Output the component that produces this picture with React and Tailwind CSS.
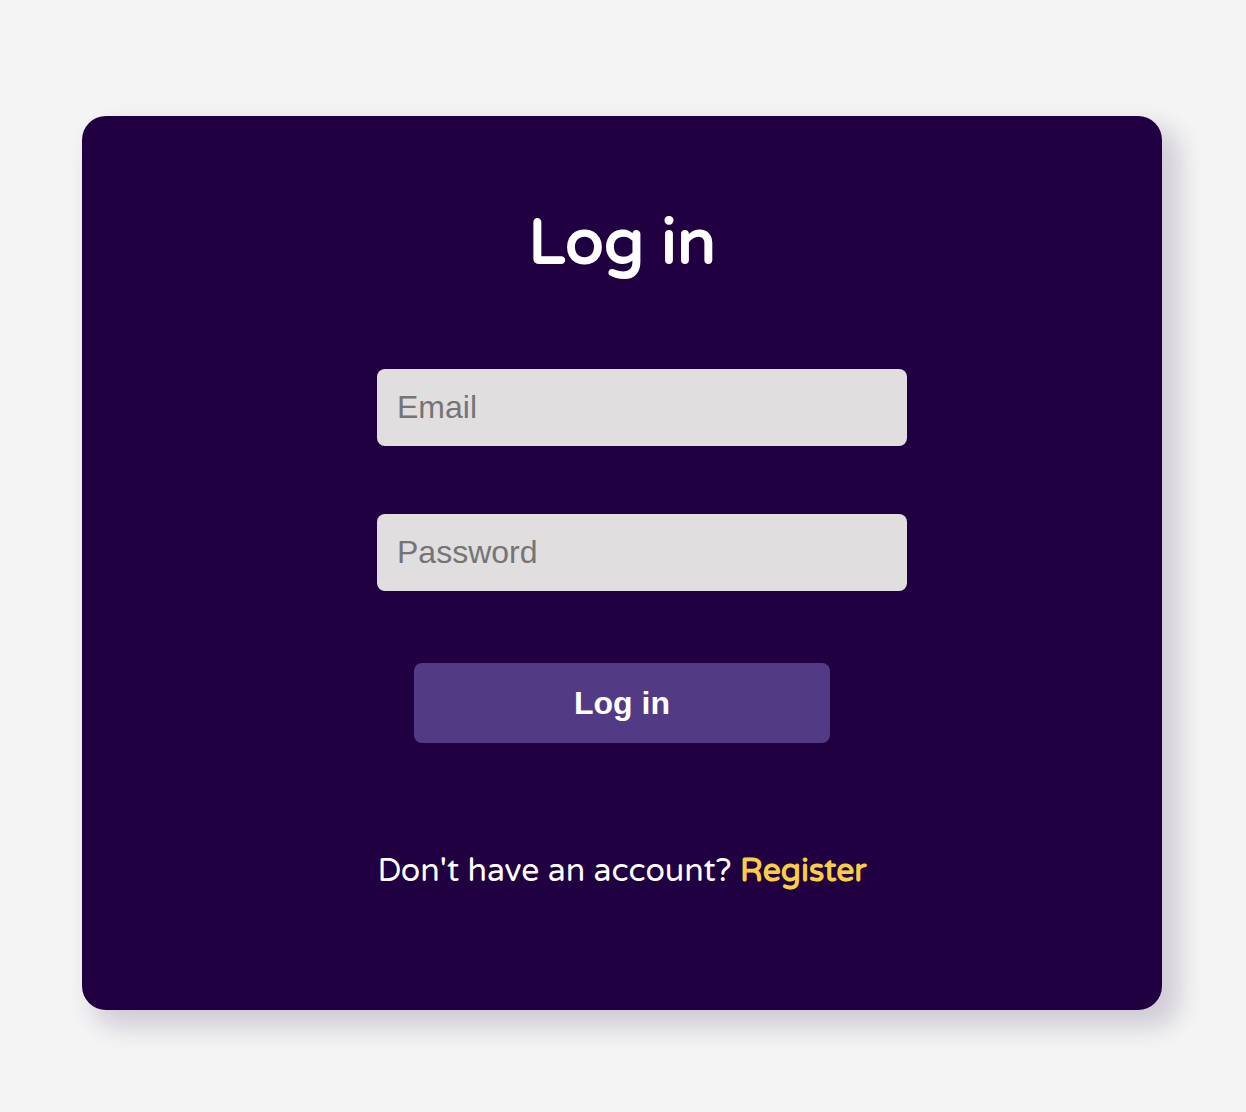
export default function App() {
  return (
    <main className="flex min-h-screen flex-col bg-[#f4f4f4] px-[82px] pt-[116px] pb-[102px] font-['Varela_Round','Lato',sans-serif] text-white">
      <section className="mr-[2px] flex flex-col items-center rounded-3xl bg-[#210042] px-8 pt-[89px] pb-[119px] shadow-[14px_14px_24px_4px_rgba(33,0,66,0.16)]">
        <h1 className="text-[64px] leading-[76px] font-bold">Log in</h1>
        <form className="flex w-full flex-col items-center" onSubmit={(e) => e.preventDefault()}>
          <input
            type="email"
            aria-label="Email"
            placeholder="Email"
            className="mt-[88px] ml-10 h-[77px] w-full max-w-[530px] rounded-lg bg-[#e0dede] px-5 font-['Liberation_Sans',sans-serif] text-[32px] text-black placeholder:text-[#757575]"
          />
          <input
            type="password"
            aria-label="Password"
            placeholder="Password"
            className="mt-[68px] ml-10 h-[77px] w-full max-w-[530px] rounded-lg bg-[#e0dede] px-5 font-['Liberation_Sans',sans-serif] text-[32px] text-black placeholder:text-[#757575]"
          />
          <button
            type="submit"
            className="mt-[72px] h-20 w-full max-w-[416px] rounded-lg bg-[#533a84] font-['Liberation_Sans',sans-serif] text-[32px] font-bold"
          >
            Log in
          </button>
        </form>
        <p className="mt-[108px] text-[32px] leading-[40px]">
          Don't have an account?{" "}
          <a href="#register" className="font-bold text-[#f9ce46]">
            Register
          </a>
        </p>
      </section>
    </main>
  );
}
